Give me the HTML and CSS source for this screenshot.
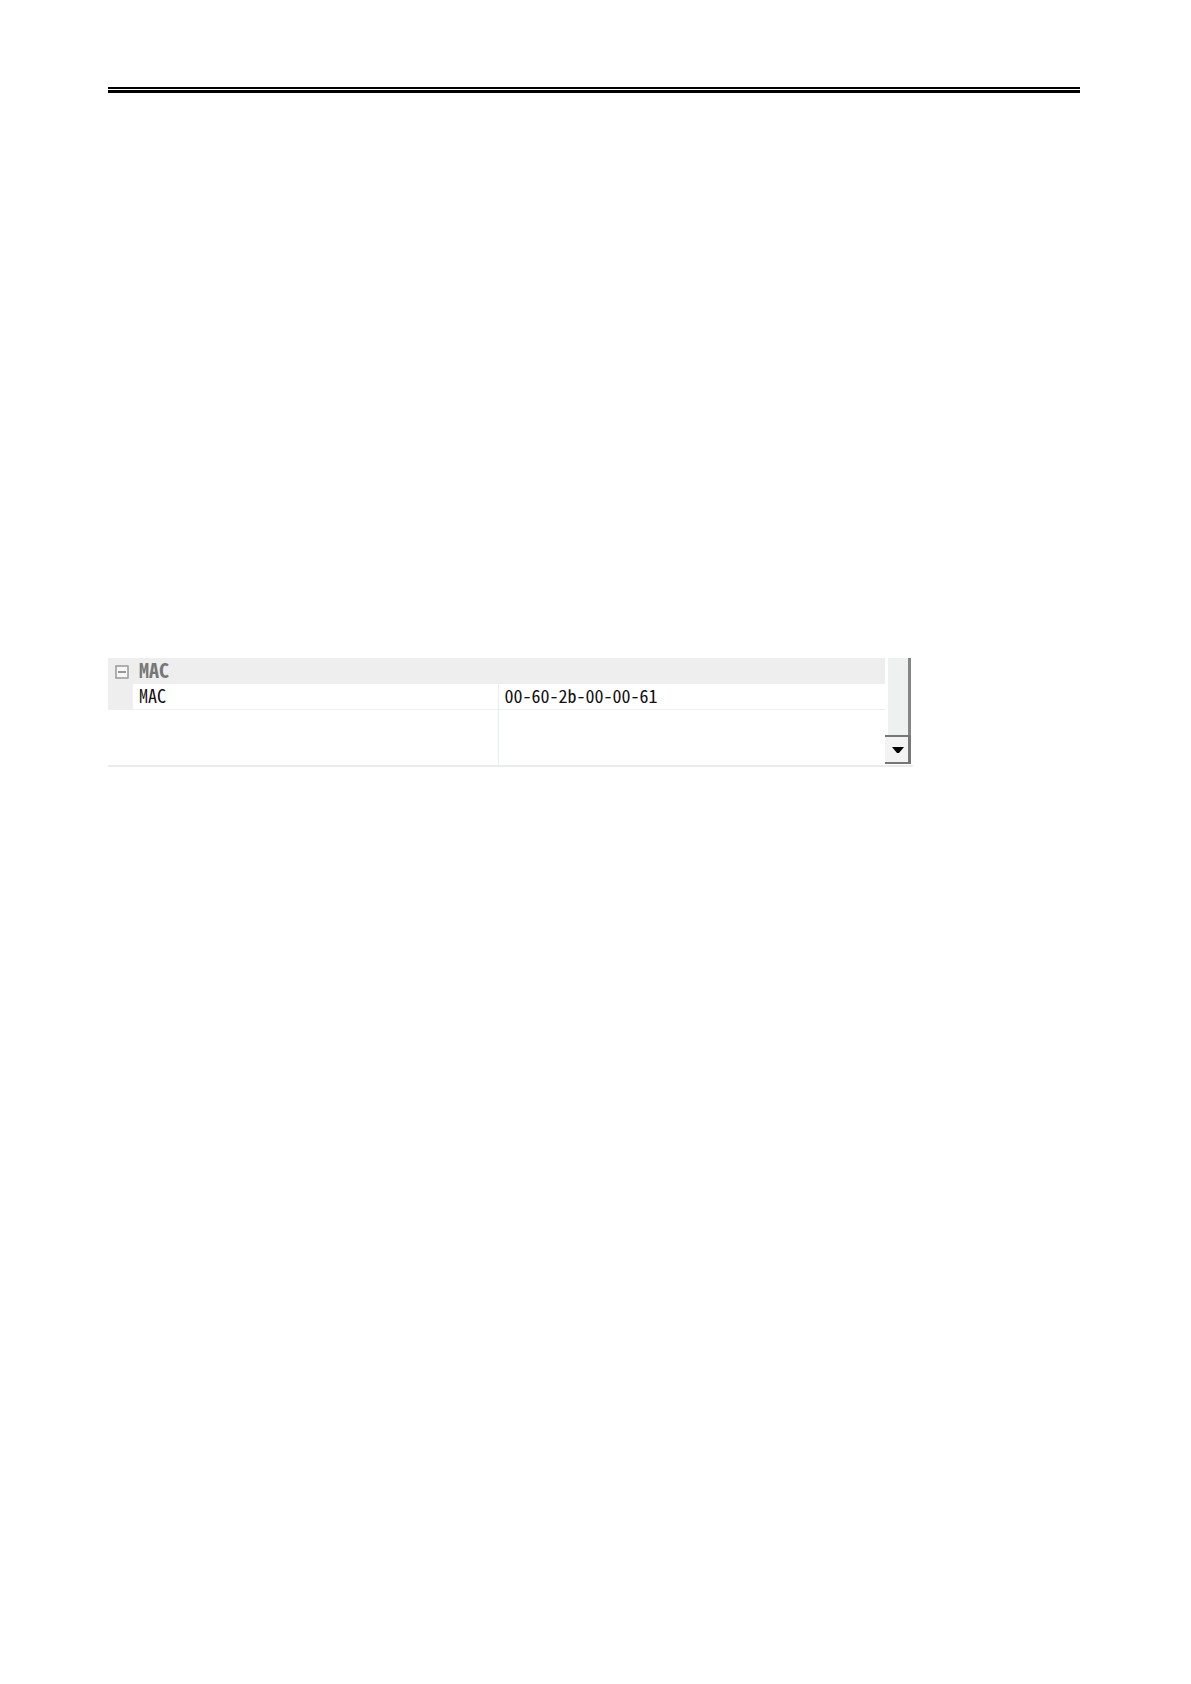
FILE: index.html
```
<!DOCTYPE html>
<html lang="en">
<head>
    <meta charset="UTF-8">
    <title>MAC</title>
    <link rel="stylesheet" href="styles.css">
</head>
<body>
    <div class="page">
        <div class="rule"></div>
        <div class="property-grid">
            <table class="properties">
                <tbody>
                    <tr class="category">
                        <td class="gutter">
                            <button class="toggle" type="button" aria-label="Collapse MAC">
                                <svg width="14" height="14" viewBox="0 0 14 14">
                                    <rect x="1" y="1" width="12" height="12" fill="#f6f6f6" stroke="#999" stroke-width="1.5"/>
                                    <path d="M3 7h8" stroke="#777" stroke-width="1.5"/>
                                </svg>
                            </button>
                        </td>
                        <th colspan="2" scope="colgroup">MAC</th>
                    </tr>
                    <tr class="property">
                        <td class="gutter"></td>
                        <th class="name" scope="row">MAC</th>
                        <td class="value">00-60-2b-00-00-61</td>
                    </tr>
                    <tr class="empty">
                        <td colspan="2"></td>
                        <td class="value"></td>
                    </tr>
                </tbody>
            </table>
            <div class="scrollbar">
                <div class="track"></div>
                <button class="scroll-down" type="button" aria-label="Scroll down">
                    <svg width="12" height="7" viewBox="0 0 12 7">
                        <path d="M0 0h12L7 6H5z" fill="#000"/>
                    </svg>
                </button>
            </div>
        </div>
    </div>
</body>
</html>
```

FILE: styles.css
```
* {
    box-sizing: border-box;
    margin: 0;
    padding: 0;
}
body {
    background: #fff;
    color: #111;
    font-family: "Noto Sans CJK SC", "Liberation Mono", monospace;
    font-size: 18px;
    line-height: 20px;
    /* fixed pitch latin glyphs */
    font-feature-settings: "hwid" 1;
}
.page {
    padding: 87px 111px 87px 108px;
}
.rule {
    height: 6px;
    border-top: 2px solid #000;
    border-bottom: 3px solid #000;
}
.property-grid {
    display: flex;
    max-width: 805px;
    margin-top: 565px;
    padding-right: 2px;
    border-bottom: 2px solid #e9eced;
}
.properties {
    flex: 1;
    border-collapse: collapse;
    table-layout: fixed;
}
.properties th,
.properties td {
    padding: 0 0 2px 6px;
    text-align: left;
    font-weight: 400;
}
.properties .gutter {
    width: 25px;
    padding: 2px 0 0 7px;
    background: #eee;
}
.category {
    height: 26px;
    background: #eee;
}
.properties .category th {
    color: #777;
    font-size: 20px;
    font-weight: 700;
}
.property {
    height: 25px;
    border-bottom: 1px solid #eef0f0;
}
.value {
    width: 387px;
    border-left: 1px solid #e6eeef;
}
.empty {
    height: 56px;
}
.toggle {
    display: block;
    width: 14px;
    height: 14px;
    border: none;
    background: none;
}
.toggle svg {
    display: block;
}
.scrollbar {
    display: flex;
    flex-direction: column;
    width: 26px;
    padding-bottom: 1px;
}
.track {
    flex: 1;
    margin-left: 3px;
    background: #eff1f1;
    border-right: 3px solid #858585;
}
.scroll-down {
    display: flex;
    align-items: center;
    justify-content: center;
    height: 29px;
    padding: 2px 0 0 2px;
    background: #f3f3f3;
    border: solid #777;
    border-width: 2px 3px 2px 0;
}
```
